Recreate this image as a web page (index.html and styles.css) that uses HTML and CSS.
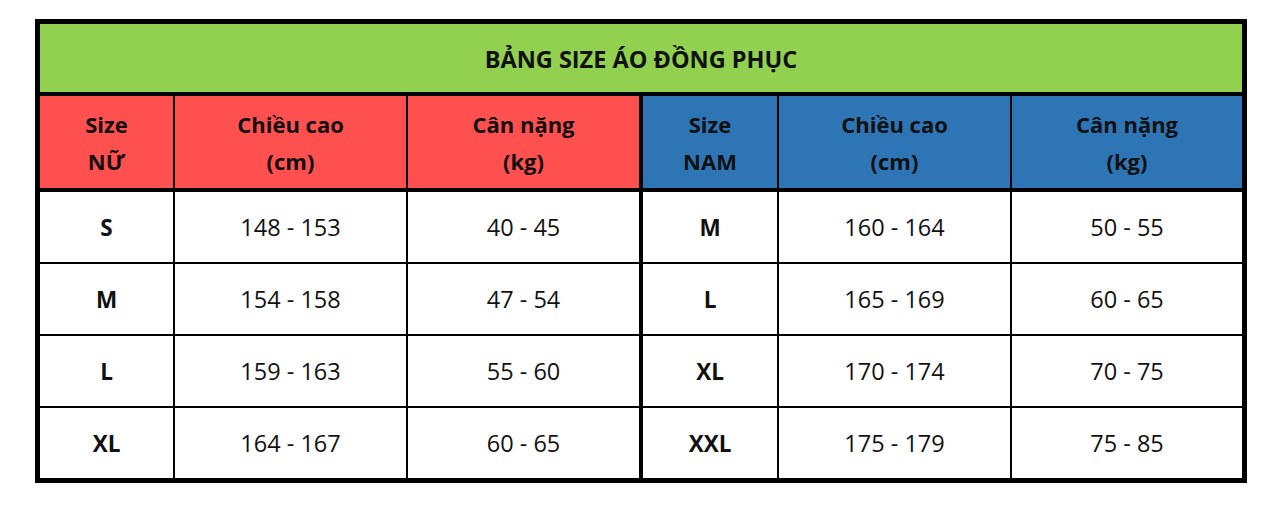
FILE: index.html
```html
<!DOCTYPE html>
<html lang="vi">
<head>
<meta charset="utf-8">
<title>Bảng size áo đồng phục</title>
<link rel="stylesheet" href="styles.css">
</head>
<body>
<div class="page">
  <div class="sheet">
    <div class="title">BẢNG SIZE ÁO ĐỒNG PHỤC</div>

    <div class="head red">Size<br>NỮ</div>
    <div class="head red">Chiều cao<br>(cm)</div>
    <div class="head red split">Cân nặng<br>(kg)</div>
    <div class="head blue">Size<br>NAM</div>
    <div class="head blue">Chiều cao<br>(cm)</div>
    <div class="head blue">Cân nặng<br>(kg)</div>

    <div class="cell size">S</div>
    <div class="cell">148 - 153</div>
    <div class="cell split">40 - 45</div>
    <div class="cell size">M</div>
    <div class="cell">160 - 164</div>
    <div class="cell">50 - 55</div>

    <div class="cell size">M</div>
    <div class="cell">154 - 158</div>
    <div class="cell split">47 - 54</div>
    <div class="cell size">L</div>
    <div class="cell">165 - 169</div>
    <div class="cell">60 - 65</div>

    <div class="cell size">L</div>
    <div class="cell">159 - 163</div>
    <div class="cell split">55 - 60</div>
    <div class="cell size">XL</div>
    <div class="cell">170 - 174</div>
    <div class="cell">70 - 75</div>

    <div class="cell size">XL</div>
    <div class="cell">164 - 167</div>
    <div class="cell split">60 - 65</div>
    <div class="cell size">XXL</div>
    <div class="cell">175 - 179</div>
    <div class="cell">75 - 85</div>
  </div>
</div>
</body>
</html>
```

FILE: styles.css
```css
html, body {
  margin: 0;
  padding: 0;
  background: #ffffff;
}

body {
  font-family: "Open Sans", "Liberation Sans", sans-serif;
  color: #111111;
}

.page {
  padding: 19px 0 0 35px;
}

.sheet {
  width: 1202px;
  border: 5px solid #000000;
  background: #000000;
  display: grid;
  grid-template-columns: 133px 231px 233px 134px 231px 230px;
  grid-template-rows: 70px 94px repeat(4, 70px);
  gap: 2px;
}

.title {
  grid-column: 1 / -1;
  margin-bottom: 2px;
  background: #92d050;
  display: flex;
  align-items: center;
  justify-content: center;
  padding-top: 2px;
  box-sizing: border-box;
  font-weight: 700;
  font-size: 23.5px;
}

.head {
  margin-bottom: 2px;
  display: flex;
  align-items: center;
  justify-content: center;
  text-align: center;
  font-weight: 700;
  font-size: 22px;
  line-height: 37px;
  padding-top: 2px;
  box-sizing: border-box;
}

.red {
  background: #ff5050;
}

.blue {
  background: #2e75b6;
}

.split {
  margin-right: 2px;
}

.cell {
  background: #ffffff;
  display: flex;
  align-items: center;
  justify-content: center;
  font-size: 23.5px;
}

.size {
  font-weight: 700;
  font-size: 22.5px;
}
```
